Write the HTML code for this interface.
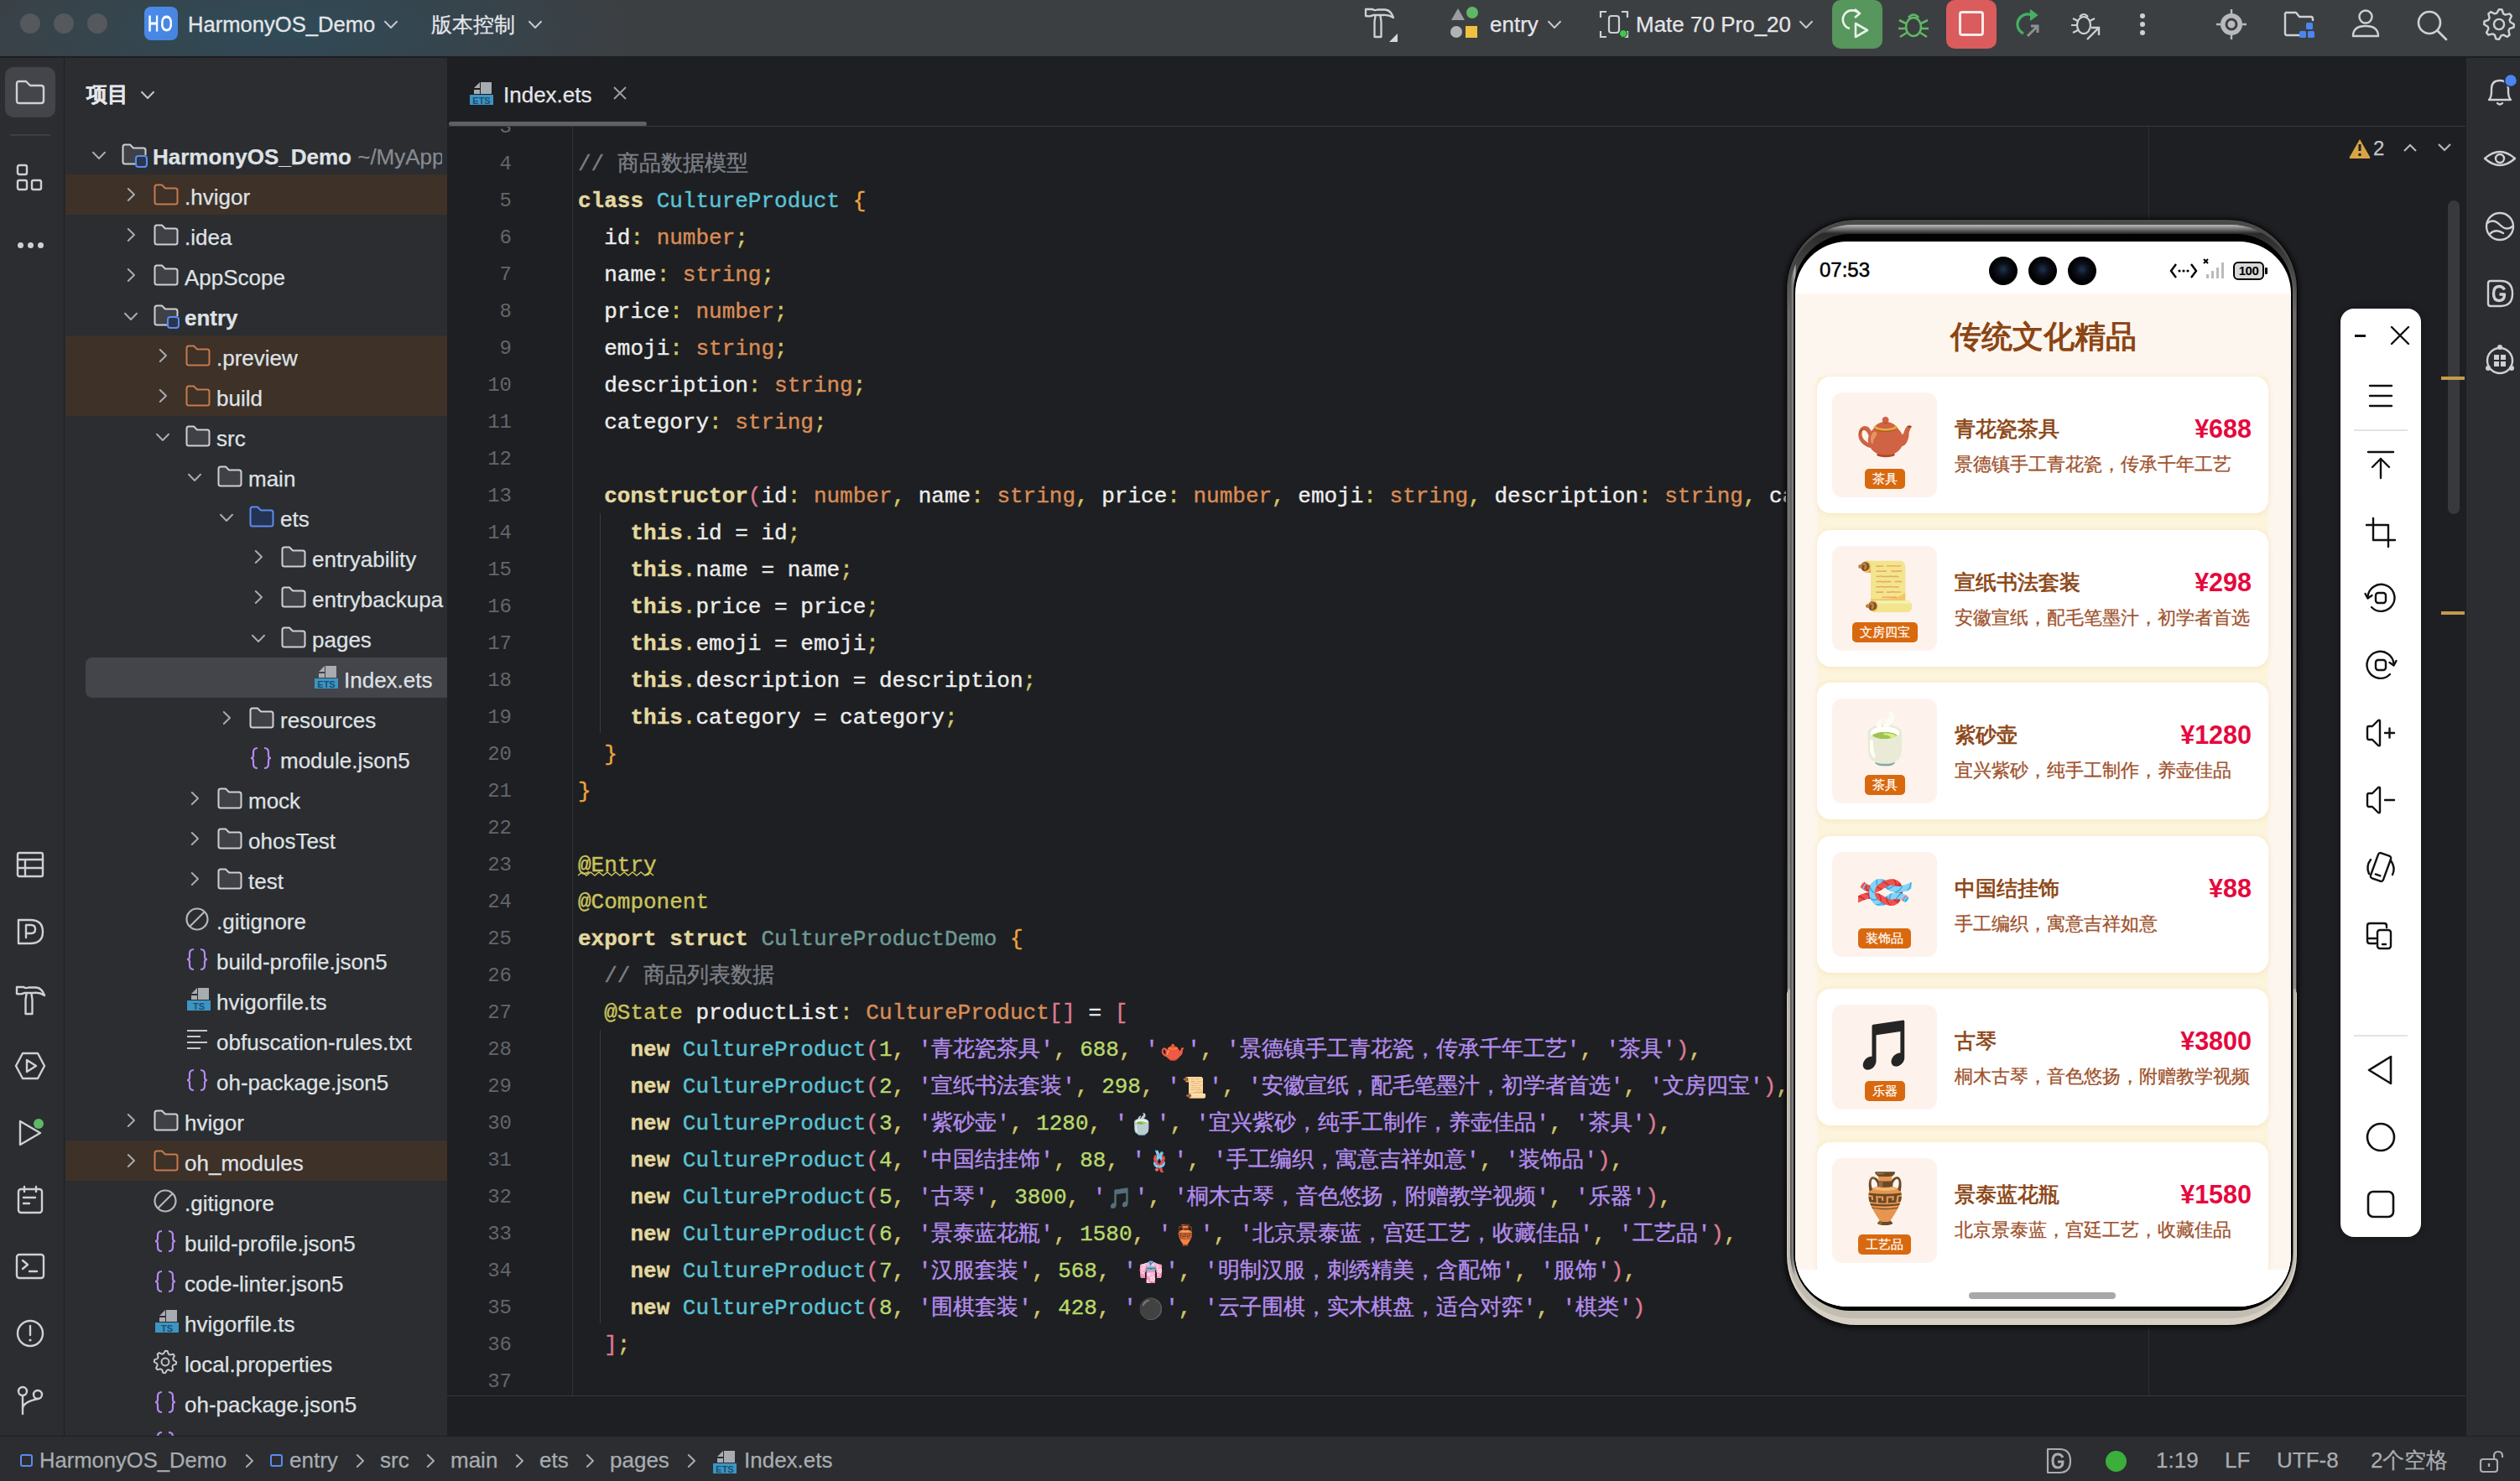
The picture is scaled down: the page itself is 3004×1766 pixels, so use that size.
<!DOCTYPE html><html><head><meta charset="utf-8"><title>DevEco</title><style>
*{box-sizing:border-box;margin:0;padding:0}
html,body{width:3004px;height:1766px;overflow:hidden;background:#1e1f22;font-family:'Liberation Sans', sans-serif;}
.a{position:absolute}
.t{position:absolute;white-space:pre;font-family:'Liberation Sans', sans-serif;font-size:26px;color:#dfe1e5;line-height:48px;-webkit-text-stroke:0.25px currentColor}
.cl{position:absolute;left:689px;height:44px;line-height:44px;white-space:pre;font-family:'Liberation Mono', monospace;font-size:26px;color:#e6e6e6;-webkit-text-stroke:0.4px currentColor}
.ln{position:absolute;left:560px;width:50px;text-align:right;height:44px;line-height:44px;font-family:'Liberation Mono', monospace;font-size:24px;color:#62666d}
.w{letter-spacing:0px}
.kw{color:#e3d9a0;font-weight:bold}
.ty{color:#d98c55}
.cls{color:#5ac3d6}
.cm{color:#7a7e85}
.br{color:#eda53c}
.sc{color:#d2c768}
.an{color:#c9c35c}
.nm{color:#b9d86e}
.st{color:#b28cec}
.pr{color:#dd7a93}
.dm{color:#6e9a96}
.fd{color:#ededed}
svg{position:absolute;overflow:visible}
</style></head><body>
<div class="a" style="left:0;top:0;width:3004px;height:68px;background:#3c3f42"></div>
<div class="a" style="left:0;top:0;width:1100px;height:68px;background:radial-gradient(ellipse 430px 110px at 330px 34px,#2f4b58 0%,rgba(50,72,84,0.7) 45%,rgba(60,63,66,0) 100%)"></div>
<div class="a" style="left:0;top:67px;width:3004px;height:2px;background:#1e1f22"></div>
<div class="a" style="left:24px;top:16px;width:24px;height:24px;border-radius:12px;background:#55585c"></div>
<div class="a" style="left:64px;top:16px;width:24px;height:24px;border-radius:12px;background:#55585c"></div>
<div class="a" style="left:104px;top:16px;width:24px;height:24px;border-radius:12px;background:#55585c"></div>
<div class="a" style="left:172px;top:8px;width:40px;height:40px;border-radius:8px;background:linear-gradient(135deg,#4a8cec,#4684dc)"></div>
<div class="a" style="left:162px;top:8px;width:60px;height:40px;color:#fff;font:26px 'Liberation Sans', sans-serif;line-height:40px;text-align:center;transform:scaleX(0.7);letter-spacing:3px;-webkit-text-stroke:0.8px #fff">HO</div>
<div class="t" style="left:224px;top:5px;font-size:25.6px;line-height:48px;color:#e4e6ea;-webkit-text-stroke:0.3px #e4e6ea">HarmonyOS_Demo</div>
<svg style="left:458px;top:21px" width="16" height="16"><path d="M1 4.8 L8.0 12.0 L15 4.8" fill="none" stroke="#c5c7cc" stroke-width="2" stroke-linecap="round" stroke-linejoin="round"/></svg>
<div class="t" style="left:514px;top:5px;font-size:25px;color:#e4e6ea">版本控制</div>
<svg style="left:630px;top:21px" width="16" height="16"><path d="M1 4.8 L8.0 12.0 L15 4.8" fill="none" stroke="#c5c7cc" stroke-width="2" stroke-linecap="round" stroke-linejoin="round"/></svg>
<svg style="left:1624px;top:6px" width="46" height="46"><path d="M4 5 H12 Q15 7 18 5.5 H27 Q34 6 37 15 Q31 11 24 12 H13 Q10 14 4 13 Z" fill="none" stroke="#ced0d6" stroke-width="2.3" stroke-linejoin="round"/><path d="M15.5 13 L14.5 20 V38 H22.5 V20 L21.5 13" fill="none" stroke="#ced0d6" stroke-width="2.3" stroke-linejoin="round"/><path d="M32 44 L42 34 V44 Z" fill="#d5d7db"/></svg>
<svg style="left:1728px;top:6px" width="40" height="44"><path d="M10 4 L18 18 H2 Z" fill="#9a9ca1"/><circle cx="27" cy="9" r="7" fill="#5fb865"/><circle cx="8" cy="32" r="7" fill="#b0b2b6"/><rect x="19" y="25" width="14" height="14" fill="#f0c040"/></svg>
<div class="t" style="left:1776px;top:5px;color:#e4e6ea">entry</div>
<svg style="left:1845px;top:21px" width="16" height="16"><path d="M1 4.8 L8.0 12.0 L15 4.8" fill="none" stroke="#c5c7cc" stroke-width="2" stroke-linecap="round" stroke-linejoin="round"/></svg>
<svg style="left:1906px;top:12px" width="36" height="34"><path d="M2 9 V2 H9 M27 2 H34 V9 M34 25 V32 H27 M9 32 H2 V25" fill="none" stroke="#ced0d6" stroke-width="2.2"/><rect x="12" y="7" width="12" height="20" rx="3" fill="none" stroke="#ced0d6" stroke-width="2.2"/><circle cx="29" cy="28" r="4.5" fill="#3fc84a" stroke="#1d3b1e" stroke-width="1"/></svg>
<div class="t" style="left:1950px;top:5px;color:#e4e6ea">Mate 70 Pro_20</div>
<svg style="left:2145px;top:21px" width="16" height="16"><path d="M1 4.8 L8.0 12.0 L15 4.8" fill="none" stroke="#c5c7cc" stroke-width="2" stroke-linecap="round" stroke-linejoin="round"/></svg>
<div class="a" style="left:2184px;top:0;width:60px;height:58px;border-radius:10px;background:#57965c"></div>
<svg style="left:2196px;top:10px" width="36" height="38"><path d="M20 6 A11 11 0 1 0 9 24" fill="none" stroke="#e8f2e8" stroke-width="2.6"/><path d="M15 1 L21 6 L15 11" fill="none" stroke="#e8f2e8" stroke-width="2.6" stroke-linejoin="round"/><path d="M16 18 L30 26 L16 34 Z" fill="none" stroke="#e8f2e8" stroke-width="2.6" stroke-linejoin="round"/></svg>
<svg style="left:2262px;top:11px" width="38" height="36"><ellipse cx="19" cy="21" rx="9" ry="11" fill="none" stroke="#5fb865" stroke-width="2.6"/><path d="M13 10 Q19 3 25 10" fill="none" stroke="#5fb865" stroke-width="2.6"/><path d="M2 13 L10 17 M36 13 L28 17 M1 23 H10 M37 23 H28 M3 33 L11 28 M35 33 L27 28" stroke="#5fb865" stroke-width="2.6"/></svg>
<div class="a" style="left:2320px;top:0;width:60px;height:58px;border-radius:10px;background:#db5c5c"></div>
<div class="a" style="left:2335px;top:13px;width:30px;height:30px;border:3px solid #fbeaea;border-radius:4px"></div>
<svg style="left:2400px;top:10px" width="36" height="38"><path d="M22 8 A11 11 0 1 0 12 30" fill="none" stroke="#45b062" stroke-width="3.2"/><path d="M20 2 L28 8 L20 14" fill="#45b062" stroke="#45b062" stroke-width="2"/><path d="M17 33 L28 22 M21 21 H29 V29" fill="none" stroke="#8c8f94" stroke-width="3"/></svg>
<svg style="left:2468px;top:11px" width="38" height="38"><ellipse cx="16" cy="19" rx="8" ry="10" fill="none" stroke="#ced0d6" stroke-width="2.2"/><path d="M11 9 Q16 3 21 9" fill="none" stroke="#ced0d6" stroke-width="2.2"/><path d="M3 11 L9 14 M29 11 L23 14 M1 19 H8 M3 28 L9 25" stroke="#ced0d6" stroke-width="2.2"/><path d="M20 36 L33 23 M25 22 H34 V31" fill="none" stroke="#ced0d6" stroke-width="2.4"/></svg>
<div class="a" style="left:2551px;top:16px;width:6px;height:6px;border-radius:3px;background:#ced0d6"></div>
<div class="a" style="left:2551px;top:26px;width:6px;height:6px;border-radius:3px;background:#ced0d6"></div>
<div class="a" style="left:2551px;top:36px;width:6px;height:6px;border-radius:3px;background:#ced0d6"></div>
<svg style="left:2640px;top:9px" width="40" height="40"><circle cx="20" cy="20" r="13" fill="#b7b9bd"/><circle cx="20" cy="20" r="6" fill="none" stroke="#3c3f42" stroke-width="3"/><path d="M20 2 V7 M20 33 V38 M2 20 H7 M33 20 H38" stroke="#b7b9bd" stroke-width="2.4"/></svg>
<svg style="left:2722px;top:11px" width="42" height="38"><path d="M2 4 H15 L19 9 H33 Q35 9 35 12 V14 M24 31 H4 Q2 31 2 29 V4" fill="none" stroke="#ced0d6" stroke-width="2.4" stroke-linejoin="round"/><rect x="27" y="16" width="8" height="8" rx="1.5" fill="#4a86f0"/><rect x="19" y="26" width="8" height="8" rx="1.5" fill="#4a86f0"/><rect x="29" y="26" width="8" height="8" rx="1.5" fill="#4a86f0"/></svg>
<svg style="left:2802px;top:9px" width="36" height="40"><circle cx="18" cy="11" r="7.5" fill="none" stroke="#ced0d6" stroke-width="2.4"/><path d="M3 34 Q3 22 18 22 Q33 22 33 34 Z" fill="none" stroke="#ced0d6" stroke-width="2.4" stroke-linejoin="round"/></svg>
<svg style="left:2880px;top:10px" width="40" height="40"><circle cx="16" cy="17" r="13" fill="none" stroke="#ced0d6" stroke-width="2.6"/><path d="M26 27 L36 37" stroke="#ced0d6" stroke-width="2.8" stroke-linecap="round"/></svg>
<svg style="left:2960px;top:10px" width="38" height="38"><path d="M19.0 1.1 L22.5 1.5 L24.2 6.4 L26.6 7.6 L31.6 6.4 L33.9 9.1 L31.6 13.8 L32.4 16.3 L36.9 19.0 L36.5 22.5 L31.6 24.2 L30.4 26.6 L31.6 31.6 L28.9 33.9 L24.2 31.6 L21.7 32.4 L19.0 36.9 L15.5 36.5 L13.8 31.6 L11.4 30.4 L6.4 31.6 L4.1 28.9 L6.4 24.2 L5.6 21.7 L1.1 19.0 L1.5 15.5 L6.4 13.8 L7.6 11.4 L6.4 6.4 L9.1 4.1 L13.8 6.4 L16.3 5.6 Z" fill="none" stroke="#ced0d6" stroke-width="2.4" stroke-linejoin="round"/><circle cx="19.0" cy="19.0" r="6.08" fill="none" stroke="#ced0d6" stroke-width="2.4"/></svg>
<div class="a" style="left:0;top:69px;width:76px;height:1643px;background:#2b2d30"></div>
<div class="a" style="left:76px;top:69px;width:1px;height:1643px;background:#1e1f22"></div>
<div class="a" style="left:6px;top:80px;width:60px;height:60px;border-radius:10px;background:#43454a"></div>
<svg style="left:18px;top:95px" width="36" height="30"><path d="M2 5 Q2 2 5 2 H13 L18 7 H31 Q34 7 34 10 V25 Q34 28 31 28 H5 Q2 28 2 25 Z" fill="none" stroke="#ced0d6" stroke-width="2.4" stroke-linejoin="round"/></svg>
<div class="a" style="left:12px;top:160px;width:48px;height:2px;background:#3c3e42"></div>
<svg style="left:19px;top:195px" width="36" height="36"><rect x="2" y="2" width="11" height="11" rx="2" fill="none" stroke="#ced0d6" stroke-width="2.4"/><rect x="2" y="20" width="11" height="11" rx="2" fill="none" stroke="#ced0d6" stroke-width="2.4"/><rect x="19" y="20" width="11" height="11" rx="2" fill="none" stroke="#ced0d6" stroke-width="2.4"/></svg>
<div class="a" style="left:21px;top:289px;width:7px;height:7px;border-radius:4px;background:#ced0d6"></div>
<div class="a" style="left:33px;top:289px;width:7px;height:7px;border-radius:4px;background:#ced0d6"></div>
<div class="a" style="left:45px;top:289px;width:7px;height:7px;border-radius:4px;background:#ced0d6"></div>
<svg style="left:16px;top:1011px" width="40" height="40"><rect x="5" y="6" width="30" height="28" rx="2" fill="none" stroke="#ced0d6" stroke-width="2.4" stroke-linejoin="round" stroke-linecap="round"/><path d="M5 14 H35 M5 24 H35 M14 14 V34" fill="none" stroke="#ced0d6" stroke-width="2.4" stroke-linejoin="round" stroke-linecap="round"/></svg>
<svg style="left:16px;top:1091px" width="40" height="40"><path d="M6 6 H20 Q35 6 35 20 Q35 34 20 34 H6 Z" fill="none" stroke="#ced0d6" stroke-width="2.4" stroke-linejoin="round" stroke-linecap="round"/><path d="M15 27 V12 H21 Q26 12 26 17 Q26 22 21 22 H15" fill="none" stroke="#ced0d6" stroke-width="2.4" stroke-linejoin="round" stroke-linecap="round"/></svg>
<svg style="left:16px;top:1171px" width="40" height="40"><path d="M4 6 H12 Q15 8 18 6.5 H27 Q34 7 37 16 Q31 12 24 13 H13 Q10 15 4 14 Z" fill="none" stroke="#ced0d6" stroke-width="2.4" stroke-linejoin="round" stroke-linecap="round"/><path d="M15.5 14 L14.5 21 V38 H22.5 V21 L21.5 14" fill="none" stroke="#ced0d6" stroke-width="2.4" stroke-linejoin="round" stroke-linecap="round"/></svg>
<svg style="left:16px;top:1251px" width="40" height="40"><path d="M11 5 H29 L37 20 L29 35 H11 L3 20 Z" fill="none" stroke="#ced0d6" stroke-width="2.4" stroke-linejoin="round" stroke-linecap="round"/><path d="M16 13 L27 20 L16 27 Z" fill="none" stroke="#ced0d6" stroke-width="2.4" stroke-linejoin="round" stroke-linecap="round"/></svg>
<svg style="left:16px;top:1331px" width="40" height="40"><path d="M8 6 L32 20 L8 34 Z" fill="none" stroke="#ced0d6" stroke-width="2.4" stroke-linejoin="round" stroke-linecap="round"/><circle cx="30" cy="9" r="6" fill="#5fb865" stroke="none"/></svg>
<svg style="left:16px;top:1411px" width="40" height="40"><rect x="6" y="7" width="28" height="28" rx="3" fill="none" stroke="#ced0d6" stroke-width="2.4" stroke-linejoin="round" stroke-linecap="round"/><path d="M13 4 V10 M27 4 V10 M12 17 H26 M12 24 H19" fill="none" stroke="#ced0d6" stroke-width="2.4" stroke-linejoin="round" stroke-linecap="round"/></svg>
<svg style="left:16px;top:1490px" width="40" height="40"><rect x="4" y="6" width="32" height="28" rx="3" fill="none" stroke="#ced0d6" stroke-width="2.4" stroke-linejoin="round" stroke-linecap="round"/><path d="M11 13 L17 18 L11 23 M19 26 H28" fill="none" stroke="#ced0d6" stroke-width="2.4" stroke-linejoin="round" stroke-linecap="round"/></svg>
<svg style="left:16px;top:1570px" width="40" height="40"><circle cx="20" cy="20" r="15" fill="none" stroke="#ced0d6" stroke-width="2.4" stroke-linejoin="round" stroke-linecap="round"/><path d="M20 11 V22" fill="none" stroke="#ced0d6" stroke-width="2.4" stroke-linejoin="round" stroke-linecap="round"/><circle cx="20" cy="28" r="1.6" fill="#ced0d6"/></svg>
<svg style="left:16px;top:1650px" width="40" height="40"><circle cx="11" cy="9" r="5" fill="none" stroke="#ced0d6" stroke-width="2.4" stroke-linejoin="round" stroke-linecap="round"/><circle cx="29" cy="13" r="5" fill="none" stroke="#ced0d6" stroke-width="2.4" stroke-linejoin="round" stroke-linecap="round"/><path d="M11 14 V36 M11 30 Q11 22 29 18" fill="none" stroke="#ced0d6" stroke-width="2.4" stroke-linejoin="round" stroke-linecap="round"/></svg>
<div class="a" style="left:77px;top:69px;width:456px;height:1643px;background:#2b2d30;overflow:hidden" id="pp">
<div class="t" style="left:26px;top:19px;font-weight:bold;font-size:25px;color:#e4e6ea">项目</div>
<svg style="left:91px;top:36px" width="16" height="16"><path d="M1 4.8 L8.0 12.0 L15 4.8" fill="none" stroke="#c5c7cc" stroke-width="2" stroke-linecap="round" stroke-linejoin="round"/></svg>
<svg style="left:32.5px;top:108px" width="16" height="16"><path d="M1 4.8 L8.0 12.0 L15 4.8" fill="none" stroke="#a8abb0" stroke-width="2" stroke-linecap="round" stroke-linejoin="round"/></svg>
<svg style="left:68px;top:102px" width="32" height="30"><path d="M16 24.5 H4 Q1.5 24.5 1.5 22 V4 Q1.5 1.5 4 1.5 H10 L14 5.5 H26 Q28.5 5.5 28.5 8 V14" fill="#3f4146" stroke="#ced0d6" stroke-width="2" stroke-linejoin="round"/><rect x="17" y="15" width="13" height="13" rx="3" fill="#2a3550" stroke="#5a8cf0" stroke-width="2"/></svg>
<div class="t" style="left:105px;top:94px;font-weight:bold;">HarmonyOS_Demo<span style="font-weight:normal;color:#868a91"> ~/MyApplication</span></div>
<div class="a" style="left:1px;top:139px;width:460px;height:48px;background:#3d3128"></div>
<svg style="left:70.5px;top:155px" width="16" height="16"><path d="M4.8 1 L12.0 8.0 L4.8 15" fill="none" stroke="#a8abb0" stroke-width="2" stroke-linecap="round" stroke-linejoin="round"/></svg>
<svg style="left:106px;top:150px" width="30" height="26"><path d="M1.5 4 Q1.5 1.5 4 1.5 H10 L14 5.5 H26 Q28.5 5.5 28.5 8 V22 Q28.5 24.5 26 24.5 H4 Q1.5 24.5 1.5 22 Z" fill="none" stroke="#c77a4c" stroke-width="2" stroke-linejoin="round"/></svg>
<div class="t" style="left:143px;top:142px;">.hvigor</div>
<svg style="left:70.5px;top:203px" width="16" height="16"><path d="M4.8 1 L12.0 8.0 L4.8 15" fill="none" stroke="#a8abb0" stroke-width="2" stroke-linecap="round" stroke-linejoin="round"/></svg>
<svg style="left:106px;top:198px" width="30" height="26"><path d="M1.5 4 Q1.5 1.5 4 1.5 H10 L14 5.5 H26 Q28.5 5.5 28.5 8 V22 Q28.5 24.5 26 24.5 H4 Q1.5 24.5 1.5 22 Z" fill="#3f4146" stroke="#ced0d6" stroke-width="2" stroke-linejoin="round"/></svg>
<div class="t" style="left:143px;top:190px;">.idea</div>
<svg style="left:70.5px;top:251px" width="16" height="16"><path d="M4.8 1 L12.0 8.0 L4.8 15" fill="none" stroke="#a8abb0" stroke-width="2" stroke-linecap="round" stroke-linejoin="round"/></svg>
<svg style="left:106px;top:246px" width="30" height="26"><path d="M1.5 4 Q1.5 1.5 4 1.5 H10 L14 5.5 H26 Q28.5 5.5 28.5 8 V22 Q28.5 24.5 26 24.5 H4 Q1.5 24.5 1.5 22 Z" fill="#3f4146" stroke="#ced0d6" stroke-width="2" stroke-linejoin="round"/></svg>
<div class="t" style="left:143px;top:238px;">AppScope</div>
<svg style="left:70.5px;top:300px" width="16" height="16"><path d="M1 4.8 L8.0 12.0 L15 4.8" fill="none" stroke="#a8abb0" stroke-width="2" stroke-linecap="round" stroke-linejoin="round"/></svg>
<svg style="left:106px;top:294px" width="32" height="30"><path d="M16 24.5 H4 Q1.5 24.5 1.5 22 V4 Q1.5 1.5 4 1.5 H10 L14 5.5 H26 Q28.5 5.5 28.5 8 V14" fill="#3f4146" stroke="#ced0d6" stroke-width="2" stroke-linejoin="round"/><rect x="17" y="15" width="13" height="13" rx="3" fill="#2a3550" stroke="#5a8cf0" stroke-width="2"/></svg>
<div class="t" style="left:143px;top:286px;font-weight:bold;">entry</div>
<div class="a" style="left:1px;top:331px;width:460px;height:48px;background:#3d3128"></div>
<svg style="left:108.5px;top:347px" width="16" height="16"><path d="M4.8 1 L12.0 8.0 L4.8 15" fill="none" stroke="#a8abb0" stroke-width="2" stroke-linecap="round" stroke-linejoin="round"/></svg>
<svg style="left:144px;top:342px" width="30" height="26"><path d="M1.5 4 Q1.5 1.5 4 1.5 H10 L14 5.5 H26 Q28.5 5.5 28.5 8 V22 Q28.5 24.5 26 24.5 H4 Q1.5 24.5 1.5 22 Z" fill="none" stroke="#c77a4c" stroke-width="2" stroke-linejoin="round"/></svg>
<div class="t" style="left:181px;top:334px;">.preview</div>
<div class="a" style="left:1px;top:379px;width:460px;height:48px;background:#3d3128"></div>
<svg style="left:108.5px;top:395px" width="16" height="16"><path d="M4.8 1 L12.0 8.0 L4.8 15" fill="none" stroke="#a8abb0" stroke-width="2" stroke-linecap="round" stroke-linejoin="round"/></svg>
<svg style="left:144px;top:390px" width="30" height="26"><path d="M1.5 4 Q1.5 1.5 4 1.5 H10 L14 5.5 H26 Q28.5 5.5 28.5 8 V22 Q28.5 24.5 26 24.5 H4 Q1.5 24.5 1.5 22 Z" fill="none" stroke="#c77a4c" stroke-width="2" stroke-linejoin="round"/></svg>
<div class="t" style="left:181px;top:382px;">build</div>
<svg style="left:108.5px;top:444px" width="16" height="16"><path d="M1 4.8 L8.0 12.0 L15 4.8" fill="none" stroke="#a8abb0" stroke-width="2" stroke-linecap="round" stroke-linejoin="round"/></svg>
<svg style="left:144px;top:438px" width="30" height="26"><path d="M1.5 4 Q1.5 1.5 4 1.5 H10 L14 5.5 H26 Q28.5 5.5 28.5 8 V22 Q28.5 24.5 26 24.5 H4 Q1.5 24.5 1.5 22 Z" fill="#3f4146" stroke="#ced0d6" stroke-width="2" stroke-linejoin="round"/></svg>
<div class="t" style="left:181px;top:430px;">src</div>
<svg style="left:146.5px;top:492px" width="16" height="16"><path d="M1 4.8 L8.0 12.0 L15 4.8" fill="none" stroke="#a8abb0" stroke-width="2" stroke-linecap="round" stroke-linejoin="round"/></svg>
<svg style="left:182px;top:486px" width="30" height="26"><path d="M1.5 4 Q1.5 1.5 4 1.5 H10 L14 5.5 H26 Q28.5 5.5 28.5 8 V22 Q28.5 24.5 26 24.5 H4 Q1.5 24.5 1.5 22 Z" fill="#3f4146" stroke="#ced0d6" stroke-width="2" stroke-linejoin="round"/></svg>
<div class="t" style="left:219px;top:478px;">main</div>
<svg style="left:184.5px;top:540px" width="16" height="16"><path d="M1 4.8 L8.0 12.0 L15 4.8" fill="none" stroke="#a8abb0" stroke-width="2" stroke-linecap="round" stroke-linejoin="round"/></svg>
<svg style="left:220px;top:534px" width="30" height="26"><path d="M1.5 4 Q1.5 1.5 4 1.5 H10 L14 5.5 H26 Q28.5 5.5 28.5 8 V22 Q28.5 24.5 26 24.5 H4 Q1.5 24.5 1.5 22 Z" fill="#243352" stroke="#5a8cf0" stroke-width="2" stroke-linejoin="round"/></svg>
<div class="t" style="left:257px;top:526px;">ets</div>
<svg style="left:222.5px;top:587px" width="16" height="16"><path d="M4.8 1 L12.0 8.0 L4.8 15" fill="none" stroke="#a8abb0" stroke-width="2" stroke-linecap="round" stroke-linejoin="round"/></svg>
<svg style="left:258px;top:582px" width="30" height="26"><path d="M1.5 4 Q1.5 1.5 4 1.5 H10 L14 5.5 H26 Q28.5 5.5 28.5 8 V22 Q28.5 24.5 26 24.5 H4 Q1.5 24.5 1.5 22 Z" fill="#3f4146" stroke="#ced0d6" stroke-width="2" stroke-linejoin="round"/></svg>
<div class="t" style="left:295px;top:574px;">entryability</div>
<svg style="left:222.5px;top:635px" width="16" height="16"><path d="M4.8 1 L12.0 8.0 L4.8 15" fill="none" stroke="#a8abb0" stroke-width="2" stroke-linecap="round" stroke-linejoin="round"/></svg>
<svg style="left:258px;top:630px" width="30" height="26"><path d="M1.5 4 Q1.5 1.5 4 1.5 H10 L14 5.5 H26 Q28.5 5.5 28.5 8 V22 Q28.5 24.5 26 24.5 H4 Q1.5 24.5 1.5 22 Z" fill="#3f4146" stroke="#ced0d6" stroke-width="2" stroke-linejoin="round"/></svg>
<div class="t" style="left:295px;top:622px;">entrybackupability</div>
<svg style="left:222.5px;top:684px" width="16" height="16"><path d="M1 4.8 L8.0 12.0 L15 4.8" fill="none" stroke="#a8abb0" stroke-width="2" stroke-linecap="round" stroke-linejoin="round"/></svg>
<svg style="left:258px;top:678px" width="30" height="26"><path d="M1.5 4 Q1.5 1.5 4 1.5 H10 L14 5.5 H26 Q28.5 5.5 28.5 8 V22 Q28.5 24.5 26 24.5 H4 Q1.5 24.5 1.5 22 Z" fill="#3f4146" stroke="#ced0d6" stroke-width="2" stroke-linejoin="round"/></svg>
<div class="t" style="left:295px;top:670px;">pages</div>
<div class="a" style="left:25px;top:715px;width:440px;height:48px;border-radius:8px;background:#43454a"></div>
<svg style="left:297px;top:723px" width="30" height="30"><path d="M6 9 L13 2 V9 Z" fill="#a8abb0"/><rect x="14" y="2" width="13" height="14" fill="#a8abb0"/><rect x="6" y="11" width="7" height="5" fill="#a8abb0"/><rect x="1" y="17" width="28" height="12" fill="#3c95c4"/><text x="15" y="27.5" text-anchor="middle" font-family="Liberation Sans" font-size="11" fill="#1d4f6e" font-weight="bold">ETS</text></svg>
<div class="t" style="left:333px;top:718px;">Index.ets</div>
<svg style="left:184.5px;top:779px" width="16" height="16"><path d="M4.8 1 L12.0 8.0 L4.8 15" fill="none" stroke="#a8abb0" stroke-width="2" stroke-linecap="round" stroke-linejoin="round"/></svg>
<svg style="left:220px;top:774px" width="30" height="26"><path d="M1.5 4 Q1.5 1.5 4 1.5 H10 L14 5.5 H26 Q28.5 5.5 28.5 8 V22 Q28.5 24.5 26 24.5 H4 Q1.5 24.5 1.5 22 Z" fill="#3f4146" stroke="#ced0d6" stroke-width="2" stroke-linejoin="round"/></svg>
<div class="t" style="left:257px;top:766px;">resources</div>
<svg style="left:219px;top:820px" width="30" height="30"><path d="M11 3 Q6 3 6 8 V12 Q6 15 3 15 Q6 15 6 18 V22 Q6 27 11 27 M19 3 Q24 3 24 8 V12 Q24 15 27 15 Q24 15 24 18 V22 Q24 27 19 27" fill="none" stroke="#b48af0" stroke-width="2.2"/></svg>
<div class="t" style="left:257px;top:814px;">module.json5</div>
<svg style="left:146.5px;top:875px" width="16" height="16"><path d="M4.8 1 L12.0 8.0 L4.8 15" fill="none" stroke="#a8abb0" stroke-width="2" stroke-linecap="round" stroke-linejoin="round"/></svg>
<svg style="left:182px;top:870px" width="30" height="26"><path d="M1.5 4 Q1.5 1.5 4 1.5 H10 L14 5.5 H26 Q28.5 5.5 28.5 8 V22 Q28.5 24.5 26 24.5 H4 Q1.5 24.5 1.5 22 Z" fill="#3f4146" stroke="#ced0d6" stroke-width="2" stroke-linejoin="round"/></svg>
<div class="t" style="left:219px;top:862px;">mock</div>
<svg style="left:146.5px;top:923px" width="16" height="16"><path d="M4.8 1 L12.0 8.0 L4.8 15" fill="none" stroke="#a8abb0" stroke-width="2" stroke-linecap="round" stroke-linejoin="round"/></svg>
<svg style="left:182px;top:918px" width="30" height="26"><path d="M1.5 4 Q1.5 1.5 4 1.5 H10 L14 5.5 H26 Q28.5 5.5 28.5 8 V22 Q28.5 24.5 26 24.5 H4 Q1.5 24.5 1.5 22 Z" fill="#3f4146" stroke="#ced0d6" stroke-width="2" stroke-linejoin="round"/></svg>
<div class="t" style="left:219px;top:910px;">ohosTest</div>
<svg style="left:146.5px;top:971px" width="16" height="16"><path d="M4.8 1 L12.0 8.0 L4.8 15" fill="none" stroke="#a8abb0" stroke-width="2" stroke-linecap="round" stroke-linejoin="round"/></svg>
<svg style="left:182px;top:966px" width="30" height="26"><path d="M1.5 4 Q1.5 1.5 4 1.5 H10 L14 5.5 H26 Q28.5 5.5 28.5 8 V22 Q28.5 24.5 26 24.5 H4 Q1.5 24.5 1.5 22 Z" fill="#3f4146" stroke="#ced0d6" stroke-width="2" stroke-linejoin="round"/></svg>
<div class="t" style="left:219px;top:958px;">test</div>
<svg style="left:143px;top:1012px" width="30" height="30"><circle cx="15" cy="15" r="12.5" fill="none" stroke="#b5b7bb" stroke-width="2.2"/><path d="M6 24 L24 6" stroke="#b5b7bb" stroke-width="2.2"/></svg>
<div class="t" style="left:181px;top:1006px;">.gitignore</div>
<svg style="left:143px;top:1060px" width="30" height="30"><path d="M11 3 Q6 3 6 8 V12 Q6 15 3 15 Q6 15 6 18 V22 Q6 27 11 27 M19 3 Q24 3 24 8 V12 Q24 15 27 15 Q24 15 24 18 V22 Q24 27 19 27" fill="none" stroke="#b48af0" stroke-width="2.2"/></svg>
<div class="t" style="left:181px;top:1054px;">build-profile.json5</div>
<svg style="left:145px;top:1107px" width="30" height="30"><path d="M6 9 L13 2 V9 Z" fill="#a8abb0"/><rect x="14" y="2" width="13" height="14" fill="#a8abb0"/><rect x="6" y="11" width="7" height="5" fill="#a8abb0"/><rect x="1" y="17" width="28" height="12" fill="#3c95c4"/><text x="15" y="27.5" text-anchor="middle" font-family="Liberation Sans" font-size="11" fill="#1d4f6e" font-weight="bold">TS</text></svg>
<div class="t" style="left:181px;top:1102px;">hvigorfile.ts</div>
<svg style="left:143px;top:1156px" width="30" height="30"><path d="M3 4 H27 M3 11 H19 M3 18 H27 M3 25 H19" stroke="#c5c7cc" stroke-width="2"/></svg>
<div class="t" style="left:181px;top:1150px;">obfuscation-rules.txt</div>
<svg style="left:143px;top:1204px" width="30" height="30"><path d="M11 3 Q6 3 6 8 V12 Q6 15 3 15 Q6 15 6 18 V22 Q6 27 11 27 M19 3 Q24 3 24 8 V12 Q24 15 27 15 Q24 15 24 18 V22 Q24 27 19 27" fill="none" stroke="#b48af0" stroke-width="2.2"/></svg>
<div class="t" style="left:181px;top:1198px;">oh-package.json5</div>
<svg style="left:70.5px;top:1259px" width="16" height="16"><path d="M4.8 1 L12.0 8.0 L4.8 15" fill="none" stroke="#a8abb0" stroke-width="2" stroke-linecap="round" stroke-linejoin="round"/></svg>
<svg style="left:106px;top:1254px" width="30" height="26"><path d="M1.5 4 Q1.5 1.5 4 1.5 H10 L14 5.5 H26 Q28.5 5.5 28.5 8 V22 Q28.5 24.5 26 24.5 H4 Q1.5 24.5 1.5 22 Z" fill="#3f4146" stroke="#ced0d6" stroke-width="2" stroke-linejoin="round"/></svg>
<div class="t" style="left:143px;top:1246px;">hvigor</div>
<div class="a" style="left:1px;top:1291px;width:460px;height:48px;background:#3d3128"></div>
<svg style="left:70.5px;top:1307px" width="16" height="16"><path d="M4.8 1 L12.0 8.0 L4.8 15" fill="none" stroke="#a8abb0" stroke-width="2" stroke-linecap="round" stroke-linejoin="round"/></svg>
<svg style="left:106px;top:1302px" width="30" height="26"><path d="M1.5 4 Q1.5 1.5 4 1.5 H10 L14 5.5 H26 Q28.5 5.5 28.5 8 V22 Q28.5 24.5 26 24.5 H4 Q1.5 24.5 1.5 22 Z" fill="none" stroke="#c77a4c" stroke-width="2" stroke-linejoin="round"/></svg>
<div class="t" style="left:143px;top:1294px;">oh_modules</div>
<svg style="left:105px;top:1348px" width="30" height="30"><circle cx="15" cy="15" r="12.5" fill="none" stroke="#b5b7bb" stroke-width="2.2"/><path d="M6 24 L24 6" stroke="#b5b7bb" stroke-width="2.2"/></svg>
<div class="t" style="left:143px;top:1342px;">.gitignore</div>
<svg style="left:105px;top:1396px" width="30" height="30"><path d="M11 3 Q6 3 6 8 V12 Q6 15 3 15 Q6 15 6 18 V22 Q6 27 11 27 M19 3 Q24 3 24 8 V12 Q24 15 27 15 Q24 15 24 18 V22 Q24 27 19 27" fill="none" stroke="#b48af0" stroke-width="2.2"/></svg>
<div class="t" style="left:143px;top:1390px;">build-profile.json5</div>
<svg style="left:105px;top:1444px" width="30" height="30"><path d="M11 3 Q6 3 6 8 V12 Q6 15 3 15 Q6 15 6 18 V22 Q6 27 11 27 M19 3 Q24 3 24 8 V12 Q24 15 27 15 Q24 15 24 18 V22 Q24 27 19 27" fill="none" stroke="#b48af0" stroke-width="2.2"/></svg>
<div class="t" style="left:143px;top:1438px;">code-linter.json5</div>
<svg style="left:107px;top:1491px" width="30" height="30"><path d="M6 9 L13 2 V9 Z" fill="#a8abb0"/><rect x="14" y="2" width="13" height="14" fill="#a8abb0"/><rect x="6" y="11" width="7" height="5" fill="#a8abb0"/><rect x="1" y="17" width="28" height="12" fill="#3c95c4"/><text x="15" y="27.5" text-anchor="middle" font-family="Liberation Sans" font-size="11" fill="#1d4f6e" font-weight="bold">TS</text></svg>
<div class="t" style="left:143px;top:1486px;">hvigorfile.ts</div>
<svg style="left:106px;top:1541px" width="28" height="28"><path d="M14.0 0.8 L16.6 1.1 L17.9 4.7 L19.6 5.6 L23.3 4.7 L24.9 6.7 L23.3 10.1 L23.9 12.0 L27.2 14.0 L26.9 16.6 L23.3 17.9 L22.4 19.6 L23.3 23.3 L21.3 24.9 L17.9 23.3 L16.0 23.9 L14.0 27.2 L11.4 26.9 L10.1 23.3 L8.4 22.4 L4.7 23.3 L3.1 21.3 L4.7 17.9 L4.1 16.0 L0.8 14.0 L1.1 11.4 L4.7 10.1 L5.6 8.4 L4.7 4.7 L6.7 3.1 L10.1 4.7 L12.0 4.1 Z" fill="none" stroke="#c5c7cc" stroke-width="2" stroke-linejoin="round"/><circle cx="14.0" cy="14.0" r="4.48" fill="none" stroke="#c5c7cc" stroke-width="2"/></svg>
<div class="t" style="left:143px;top:1534px;">local.properties</div>
<svg style="left:105px;top:1588px" width="30" height="30"><path d="M11 3 Q6 3 6 8 V12 Q6 15 3 15 Q6 15 6 18 V22 Q6 27 11 27 M19 3 Q24 3 24 8 V12 Q24 15 27 15 Q24 15 24 18 V22 Q24 27 19 27" fill="none" stroke="#b48af0" stroke-width="2.2"/></svg>
<div class="t" style="left:143px;top:1582px;">oh-package.json5</div>
<svg style="left:105px;top:1636px" width="30" height="30"><path d="M11 3 Q6 3 6 8 V12 Q6 15 3 15 Q6 15 6 18 V22 Q6 27 11 27 M19 3 Q24 3 24 8 V12 Q24 15 27 15 Q24 15 24 18 V22 Q24 27 19 27" fill="none" stroke="#b48af0" stroke-width="2.2"/></svg>
<div class="t" style="left:143px;top:1630px;"></div>
<div class="a" style="left:452px;top:619px;width:6px;height:48px;background:#2b2d30"></div>
<div class="a" style="left:450px;top:91px;width:8px;height:48px;background:#2b2d30"></div>
</div>
<div class="a" style="left:533px;top:69px;width:2407px;height:1643px;background:#1e1f22"></div>
<svg style="left:559px;top:96px" width="30" height="30"><path d="M6 9 L13 2 V9 Z" fill="#a8abb0"/><rect x="14" y="2" width="13" height="14" fill="#a8abb0"/><rect x="6" y="11" width="7" height="5" fill="#a8abb0"/><rect x="1" y="17" width="28" height="12" fill="#3c95c4"/><text x="15" y="27.5" text-anchor="middle" font-family="Liberation Sans" font-size="11" fill="#1d4f6e" font-weight="bold">ETS</text></svg>
<div class="t" style="left:600px;top:89px;color:#e4e6ea">Index.ets</div>
<svg style="left:731px;top:103px" width="16" height="16"><path d="M1 1 L15 15 M15 1 L1 15" stroke="#9a9da2" stroke-width="2"/></svg>
<div class="a" style="left:533px;top:150px;width:2407px;height:1px;background:#35373b"></div>
<div class="a" style="left:535px;top:145px;width:236px;height:5px;border-radius:3px;background:#5d6064"></div>
<div class="a" style="left:682px;top:151px;width:1px;height:1514px;background:#313337"></div>
<div class="a" style="left:2561px;top:151px;width:1px;height:1514px;background:#2e3034"></div>
<div class="a" style="left:533px;top:1664px;width:2407px;height:1px;background:#35373b"></div>
<div class="a" style="left:2918px;top:239px;width:14px;height:374px;border-radius:7px;background:#37393d"></div>
<div class="a" style="left:2910px;top:449px;width:28px;height:4px;background:#c49a4a"></div>
<div class="a" style="left:2910px;top:729px;width:28px;height:4px;background:#c49a4a"></div>
<svg style="left:2799px;top:164px" width="28" height="26"><path d="M14 2 L26 23 Q27 25 25 25 H3 Q1 25 2 23 Z" fill="#d9a444"/><path d="M14 8 V16" stroke="#1e1f22" stroke-width="3"/><circle cx="14" cy="20.5" r="1.8" fill="#1e1f22"/></svg>
<div class="t" style="left:2829px;top:153px;font-size:24px;color:#c5c7cc">2</div>
<svg style="left:2864px;top:170px" width="18" height="12"><path d="M2 10 L9 3 L16 10" fill="none" stroke="#b5b7bb" stroke-width="2.2"/></svg>
<svg style="left:2905px;top:170px" width="18" height="12"><path d="M2 2 L9 9 L16 2" fill="none" stroke="#b5b7bb" stroke-width="2.2"/></svg>
<div class="ln" style="top:130px">3</div>
<div class="ln" style="top:174px">4</div>
<div class="cl" style="top:174px"><span class="cm">// <span class="w">商品数据模型</span></span></div>
<div class="ln" style="top:218px">5</div>
<div class="cl" style="top:218px"><span class="kw">class</span> <span class="cls">CultureProduct</span> <span class="br">{</span></div>
<div class="ln" style="top:262px">6</div>
<div class="cl" style="top:262px">  <span class="fd">id</span><span class="sc">:</span> <span class="ty">number</span><span class="sc">;</span></div>
<div class="ln" style="top:306px">7</div>
<div class="cl" style="top:306px">  <span class="fd">name</span><span class="sc">:</span> <span class="ty">string</span><span class="sc">;</span></div>
<div class="ln" style="top:350px">8</div>
<div class="cl" style="top:350px">  <span class="fd">price</span><span class="sc">:</span> <span class="ty">number</span><span class="sc">;</span></div>
<div class="ln" style="top:394px">9</div>
<div class="cl" style="top:394px">  <span class="fd">emoji</span><span class="sc">:</span> <span class="ty">string</span><span class="sc">;</span></div>
<div class="ln" style="top:438px">10</div>
<div class="cl" style="top:438px">  <span class="fd">description</span><span class="sc">:</span> <span class="ty">string</span><span class="sc">;</span></div>
<div class="ln" style="top:482px">11</div>
<div class="cl" style="top:482px">  <span class="fd">category</span><span class="sc">:</span> <span class="ty">string</span><span class="sc">;</span></div>
<div class="ln" style="top:526px">12</div>
<div class="ln" style="top:570px">13</div>
<div class="cl" style="top:570px">  <span class="kw">constructor</span><span class="pr">(</span><span class="fd">id</span><span class="sc">:</span> <span class="ty">number</span><span class="sc">,</span> <span class="fd">name</span><span class="sc">:</span> <span class="ty">string</span><span class="sc">,</span> <span class="fd">price</span><span class="sc">:</span> <span class="ty">number</span><span class="sc">,</span> <span class="fd">emoji</span><span class="sc">:</span> <span class="ty">string</span><span class="sc">,</span> <span class="fd">description</span><span class="sc">:</span> <span class="ty">string</span><span class="sc">,</span> <span class="fd">category</span><span class="sc">:</span> <span class="ty">string</span><span class="pr">)</span> <span class="br">{</span></div>
<div class="ln" style="top:614px">14</div>
<div class="cl" style="top:614px">    <span class="kw">this</span><span class="sc">.</span><span class="fd">id</span> <span class="fd">=</span> <span class="fd">id</span><span class="sc">;</span></div>
<div class="ln" style="top:658px">15</div>
<div class="cl" style="top:658px">    <span class="kw">this</span><span class="sc">.</span><span class="fd">name</span> <span class="fd">=</span> <span class="fd">name</span><span class="sc">;</span></div>
<div class="ln" style="top:702px">16</div>
<div class="cl" style="top:702px">    <span class="kw">this</span><span class="sc">.</span><span class="fd">price</span> <span class="fd">=</span> <span class="fd">price</span><span class="sc">;</span></div>
<div class="ln" style="top:746px">17</div>
<div class="cl" style="top:746px">    <span class="kw">this</span><span class="sc">.</span><span class="fd">emoji</span> <span class="fd">=</span> <span class="fd">emoji</span><span class="sc">;</span></div>
<div class="ln" style="top:790px">18</div>
<div class="cl" style="top:790px">    <span class="kw">this</span><span class="sc">.</span><span class="fd">description</span> <span class="fd">=</span> <span class="fd">description</span><span class="sc">;</span></div>
<div class="ln" style="top:834px">19</div>
<div class="cl" style="top:834px">    <span class="kw">this</span><span class="sc">.</span><span class="fd">category</span> <span class="fd">=</span> <span class="fd">category</span><span class="sc">;</span></div>
<div class="ln" style="top:878px">20</div>
<div class="cl" style="top:878px">  <span class="br">}</span></div>
<div class="ln" style="top:922px">21</div>
<div class="cl" style="top:922px"><span class="br">}</span></div>
<div class="ln" style="top:966px">22</div>
<div class="ln" style="top:1010px">23</div>
<div class="cl" style="top:1010px"><span class="an">@Entry</span></div>
<div class="ln" style="top:1054px">24</div>
<div class="cl" style="top:1054px"><span class="an">@Component</span></div>
<div class="ln" style="top:1098px">25</div>
<div class="cl" style="top:1098px"><span class="kw">export</span> <span class="kw">struct</span> <span class="dm">CultureProductDemo</span> <span class="br">{</span></div>
<div class="ln" style="top:1142px">26</div>
<div class="cl" style="top:1142px">  <span class="cm">// <span class="w">商品列表数据</span></span></div>
<div class="ln" style="top:1186px">27</div>
<div class="cl" style="top:1186px">  <span class="an">@State</span> <span class="fd">productList</span><span class="sc">:</span> <span class="ty">CultureProduct</span><span class="pr">[]</span> <span class="fd">=</span> <span class="pr">[</span></div>
<div class="ln" style="top:1230px">28</div>
<div class="cl" style="top:1230px">    <span class="kw">new</span> <span class="cls">CultureProduct</span><span class="pr">(</span><span class="nm">1</span><span class="sc">,</span> <span class="st">'<span class="w">青花瓷茶具</span>'</span><span class="sc">,</span> <span class="nm">688</span><span class="sc">,</span> <span class="st">'</span><span style="display:inline-block;width:34.4px;text-align:left;padding-left:2px;font-size:24px;line-height:20px;vertical-align:-2px">🫖</span><span class="st">'</span><span class="sc">,</span> <span class="st">'<span class="w">景德镇手工青花瓷，传承千年工艺</span>'</span><span class="sc">,</span> <span class="st">'<span class="w">茶具</span>'</span><span class="pr">)</span><span class="sc">,</span></div>
<div class="ln" style="top:1274px">29</div>
<div class="cl" style="top:1274px">    <span class="kw">new</span> <span class="cls">CultureProduct</span><span class="pr">(</span><span class="nm">2</span><span class="sc">,</span> <span class="st">'<span class="w">宣纸书法套装</span>'</span><span class="sc">,</span> <span class="nm">298</span><span class="sc">,</span> <span class="st">'</span><span style="display:inline-block;width:34.4px;text-align:left;padding-left:2px;font-size:24px;line-height:20px;vertical-align:-2px">📜</span><span class="st">'</span><span class="sc">,</span> <span class="st">'<span class="w">安徽宣纸，配毛笔墨汁，初学者首选</span>'</span><span class="sc">,</span> <span class="st">'<span class="w">文房四宝</span>'</span><span class="pr">)</span><span class="sc">,</span></div>
<div class="ln" style="top:1318px">30</div>
<div class="cl" style="top:1318px">    <span class="kw">new</span> <span class="cls">CultureProduct</span><span class="pr">(</span><span class="nm">3</span><span class="sc">,</span> <span class="st">'<span class="w">紫砂壶</span>'</span><span class="sc">,</span> <span class="nm">1280</span><span class="sc">,</span> <span class="st">'</span><span style="display:inline-block;width:34.4px;text-align:left;padding-left:2px;font-size:24px;line-height:20px;vertical-align:-2px">🍵</span><span class="st">'</span><span class="sc">,</span> <span class="st">'<span class="w">宜兴紫砂，纯手工制作，养壶佳品</span>'</span><span class="sc">,</span> <span class="st">'<span class="w">茶具</span>'</span><span class="pr">)</span><span class="sc">,</span></div>
<div class="ln" style="top:1362px">31</div>
<div class="cl" style="top:1362px">    <span class="kw">new</span> <span class="cls">CultureProduct</span><span class="pr">(</span><span class="nm">4</span><span class="sc">,</span> <span class="st">'<span class="w">中国结挂饰</span>'</span><span class="sc">,</span> <span class="nm">88</span><span class="sc">,</span> <span class="st">'</span><span style="display:inline-block;width:34.4px;text-align:left;padding-left:2px;font-size:24px;line-height:20px;vertical-align:-2px">🪢</span><span class="st">'</span><span class="sc">,</span> <span class="st">'<span class="w">手工编织，寓意吉祥如意</span>'</span><span class="sc">,</span> <span class="st">'<span class="w">装饰品</span>'</span><span class="pr">)</span><span class="sc">,</span></div>
<div class="ln" style="top:1406px">32</div>
<div class="cl" style="top:1406px">    <span class="kw">new</span> <span class="cls">CultureProduct</span><span class="pr">(</span><span class="nm">5</span><span class="sc">,</span> <span class="st">'<span class="w">古琴</span>'</span><span class="sc">,</span> <span class="nm">3800</span><span class="sc">,</span> <span class="st">'</span><span style="display:inline-block;width:34.4px;text-align:left;padding-left:2px;font-size:24px;line-height:20px;vertical-align:-2px">🎵</span><span class="st">'</span><span class="sc">,</span> <span class="st">'<span class="w">桐木古琴，音色悠扬，附赠教学视频</span>'</span><span class="sc">,</span> <span class="st">'<span class="w">乐器</span>'</span><span class="pr">)</span><span class="sc">,</span></div>
<div class="ln" style="top:1450px">33</div>
<div class="cl" style="top:1450px">    <span class="kw">new</span> <span class="cls">CultureProduct</span><span class="pr">(</span><span class="nm">6</span><span class="sc">,</span> <span class="st">'<span class="w">景泰蓝花瓶</span>'</span><span class="sc">,</span> <span class="nm">1580</span><span class="sc">,</span> <span class="st">'</span><span style="display:inline-block;width:34.4px;text-align:left;padding-left:2px;font-size:24px;line-height:20px;vertical-align:-2px">🏺</span><span class="st">'</span><span class="sc">,</span> <span class="st">'<span class="w">北京景泰蓝，宫廷工艺，收藏佳品</span>'</span><span class="sc">,</span> <span class="st">'<span class="w">工艺品</span>'</span><span class="pr">)</span><span class="sc">,</span></div>
<div class="ln" style="top:1494px">34</div>
<div class="cl" style="top:1494px">    <span class="kw">new</span> <span class="cls">CultureProduct</span><span class="pr">(</span><span class="nm">7</span><span class="sc">,</span> <span class="st">'<span class="w">汉服套装</span>'</span><span class="sc">,</span> <span class="nm">568</span><span class="sc">,</span> <span class="st">'</span><span style="display:inline-block;width:34.4px;text-align:left;padding-left:2px;font-size:24px;line-height:20px;vertical-align:-2px">👘</span><span class="st">'</span><span class="sc">,</span> <span class="st">'<span class="w">明制汉服，刺绣精美，含配饰</span>'</span><span class="sc">,</span> <span class="st">'<span class="w">服饰</span>'</span><span class="pr">)</span><span class="sc">,</span></div>
<div class="ln" style="top:1538px">35</div>
<div class="cl" style="top:1538px">    <span class="kw">new</span> <span class="cls">CultureProduct</span><span class="pr">(</span><span class="nm">8</span><span class="sc">,</span> <span class="st">'<span class="w">围棋套装</span>'</span><span class="sc">,</span> <span class="nm">428</span><span class="sc">,</span> <span class="st">'</span><span style="display:inline-block;width:34.4px;text-align:left;padding-left:2px;font-size:24px;line-height:20px;vertical-align:-2px">⚫</span><span class="st">'</span><span class="sc">,</span> <span class="st">'<span class="w">云子围棋，实木棋盘，适合对弈</span>'</span><span class="sc">,</span> <span class="st">'<span class="w">棋类</span>'</span><span class="pr">)</span></div>
<div class="ln" style="top:1582px">36</div>
<div class="cl" style="top:1582px">  <span class="pr">]</span><span class="sc">;</span></div>
<div class="ln" style="top:1626px">37</div>
<svg style="left:689px;top:1038px" width="94" height="8"><path d="M0 6 L5 2 L10 6 L15 2 L20 6 L25 2 L30 6 L35 2 L40 6 L45 2 L50 6 L55 2 L60 6 L65 2 L70 6 L75 2 L80 6 L85 2 L90 6" fill="none" stroke="#c9c35c" stroke-width="1.5"/></svg>
<div class="a" style="left:715px;top:612px;width:1px;height:262px;background:#393b3f"></div>
<div class="a" style="left:715px;top:1228px;width:1px;height:350px;background:#393b3f"></div>
<div class="a" style="left:533px;top:69px;width:2407px;height:81px;background:#1e1f22"></div>
<svg style="left:559px;top:96px" width="30" height="30"><path d="M6 9 L13 2 V9 Z" fill="#a8abb0"/><rect x="14" y="2" width="13" height="14" fill="#a8abb0"/><rect x="6" y="11" width="7" height="5" fill="#a8abb0"/><rect x="1" y="17" width="28" height="12" fill="#3c95c4"/><text x="15" y="27.5" text-anchor="middle" font-family="Liberation Sans" font-size="11" fill="#1d4f6e" font-weight="bold">ETS</text></svg>
<div class="t" style="left:600px;top:89px;color:#e4e6ea">Index.ets</div>
<svg style="left:731px;top:103px" width="16" height="16"><path d="M1 1 L15 15 M15 1 L1 15" stroke="#9a9da2" stroke-width="2"/></svg>
<div class="a" style="left:533px;top:150px;width:2407px;height:1px;background:#35373b"></div>
<div class="a" style="left:535px;top:145px;width:236px;height:5px;border-radius:3px;background:#5d6064"></div>
<div class="a" style="left:2940px;top:69px;width:64px;height:1643px;background:#2b2d30"></div>
<div class="a" style="left:2939px;top:69px;width:1px;height:1643px;background:#1e1f22"></div>
<svg style="left:2960px;top:89px" width="40" height="40"><path d="M7 30 Q10 27 10 20 V17 Q10 7 20 7 Q30 7 30 17 V20 Q30 27 33 30 Z" fill="none" stroke="#ced0d6" stroke-width="2.4" stroke-linejoin="round" stroke-linecap="round"/><path d="M17 34 Q20 37 23 34" fill="none" stroke="#ced0d6" stroke-width="2.4" stroke-linejoin="round" stroke-linecap="round"/><circle cx="33" cy="7" r="7.5" fill="#4a86f0" stroke="#2b2d30" stroke-width="1.5"/></svg>
<svg style="left:2960px;top:169px" width="40" height="40"><path d="M2 20 Q20 4 38 20 Q20 36 2 20 Z" fill="none" stroke="#ced0d6" stroke-width="2.4" stroke-linejoin="round" stroke-linecap="round"/><circle cx="20" cy="20" r="5" fill="none" stroke="#ced0d6" stroke-width="2.4" stroke-linejoin="round" stroke-linecap="round"/></svg>
<svg style="left:2960px;top:250px" width="40" height="40"><circle cx="20" cy="20" r="16" fill="none" stroke="#ced0d6" stroke-width="2.4" stroke-linejoin="round" stroke-linecap="round"/><path d="M5 16 Q12 10 20 18 Q28 26 35 20 M8 29 Q15 22 24 28" fill="none" stroke="#ced0d6" stroke-width="2.4" stroke-linejoin="round" stroke-linecap="round"/></svg>
<svg style="left:2960px;top:330px" width="40" height="40"><path d="M9 5 H21 Q35 5 35 20 Q35 35 21 35 H9 Q6 35 6 32 V8 Q6 5 9 5 Z" fill="none" stroke="#ced0d6" stroke-width="2.4" stroke-linejoin="round" stroke-linecap="round"/><path d="M25.5 15.5 Q23.5 11.5 19 11.5 Q12.5 11.5 12.5 20 Q12.5 28.5 19 28.5 Q25.5 28.5 25.5 21 H19.5" fill="none" stroke="#ced0d6" stroke-width="3.4" stroke-linejoin="round"/></svg>
<svg style="left:2960px;top:409px" width="40" height="40"><circle cx="20" cy="21" r="15" fill="none" stroke="#ced0d6" stroke-width="2.4" stroke-linejoin="round" stroke-linecap="round"/><rect x="13" y="14" width="6" height="6" fill="#ced0d6"/><rect x="21" y="14" width="6" height="6" fill="#ced0d6"/><rect x="13" y="22" width="6" height="6" fill="#ced0d6"/><rect x="21" y="22" width="6" height="6" fill="#ced0d6"/><circle cx="20" cy="5" r="3" fill="#ced0d6"/><circle cx="6" cy="30" r="3" fill="#ced0d6"/><circle cx="34" cy="30" r="3" fill="#ced0d6"/></svg>
<div class="a" style="left:0;top:1712px;width:3004px;height:54px;background:#2b2d30"></div>
<div class="a" style="left:0;top:1712px;width:3004px;height:1px;background:#1e1f22"></div>
<div class="a" style="left:24px;top:1734px;width:15px;height:15px;border:2.2px solid #5a8cf0;border-radius:3px"></div>
<div class="t" style="left:47px;top:1717px;color:#a9acb1;font-size:25.6px">HarmonyOS_Demo</div>
<svg style="left:289px;top:1734px" width="16" height="16"><path d="M4.8 1 L12.0 8.0 L4.8 15" fill="none" stroke="#a9acb1" stroke-width="2" stroke-linecap="round" stroke-linejoin="round"/></svg>
<div class="a" style="left:322px;top:1734px;width:15px;height:15px;border:2.2px solid #5a8cf0;border-radius:3px"></div>
<div class="t" style="left:345px;top:1717px;color:#a9acb1">entry</div>
<svg style="left:421px;top:1734px" width="16" height="16"><path d="M4.8 1 L12.0 8.0 L4.8 15" fill="none" stroke="#a9acb1" stroke-width="2" stroke-linecap="round" stroke-linejoin="round"/></svg>
<div class="t" style="left:453px;top:1717px;color:#a9acb1">src</div>
<svg style="left:505px;top:1734px" width="16" height="16"><path d="M4.8 1 L12.0 8.0 L4.8 15" fill="none" stroke="#a9acb1" stroke-width="2" stroke-linecap="round" stroke-linejoin="round"/></svg>
<div class="t" style="left:537px;top:1717px;color:#a9acb1">main</div>
<svg style="left:611px;top:1734px" width="16" height="16"><path d="M4.8 1 L12.0 8.0 L4.8 15" fill="none" stroke="#a9acb1" stroke-width="2" stroke-linecap="round" stroke-linejoin="round"/></svg>
<div class="t" style="left:643px;top:1717px;color:#a9acb1">ets</div>
<svg style="left:695px;top:1734px" width="16" height="16"><path d="M4.8 1 L12.0 8.0 L4.8 15" fill="none" stroke="#a9acb1" stroke-width="2" stroke-linecap="round" stroke-linejoin="round"/></svg>
<div class="t" style="left:727px;top:1717px;color:#a9acb1">pages</div>
<svg style="left:816px;top:1734px" width="16" height="16"><path d="M4.8 1 L12.0 8.0 L4.8 15" fill="none" stroke="#a9acb1" stroke-width="2" stroke-linecap="round" stroke-linejoin="round"/></svg>
<svg style="left:849px;top:1728px" width="30" height="30"><path d="M6 9 L13 2 V9 Z" fill="#a8abb0"/><rect x="14" y="2" width="13" height="14" fill="#a8abb0"/><rect x="6" y="11" width="7" height="5" fill="#a8abb0"/><rect x="1" y="17" width="28" height="12" fill="#3c95c4"/><text x="15" y="27.5" text-anchor="middle" font-family="Liberation Sans" font-size="11" fill="#1d4f6e" font-weight="bold">ETS</text></svg>
<div class="t" style="left:887px;top:1717px;color:#a9acb1">Index.ets</div>
<svg style="left:2437px;top:1725px" width="34" height="34"><path d="M4 3 H18 Q31 3 31 17 Q31 31 18 31 H4 Z" fill="none" stroke="#a9acb1" stroke-width="2.2" stroke-linejoin="round"/><path d="M22 13 Q20 9 16 9 Q10 9 10 17 Q10 25 16 25 Q22 25 22 18 H16" fill="none" stroke="#a9acb1" stroke-width="3"/></svg>
<div class="a" style="left:2510px;top:1730px;width:25px;height:25px;border-radius:13px;background:#3bae3c"></div>
<div class="t" style="left:2570px;top:1717px;color:#a9acb1">1:19</div>
<div class="t" style="left:2652px;top:1717px;color:#a9acb1">LF</div>
<div class="t" style="left:2714px;top:1717px;color:#a9acb1">UTF-8</div>
<div class="t" style="left:2826px;top:1717px;color:#a9acb1">2个空格</div>
<svg style="left:2955px;top:1728px" width="32" height="30"><rect x="2" y="12" width="20" height="15" rx="3" fill="none" stroke="#a9acb1" stroke-width="2.2"/><path d="M18 12 V8 Q18 3 23 3 Q28 3 28 8 V10" fill="none" stroke="#a9acb1" stroke-width="2.2"/><path d="M12 17 V21" stroke="#a9acb1" stroke-width="2.4"/></svg>
<div class="a" style="left:2126px;top:259px;width:616px;height:1326px;border-radius:86px;background:rgba(0,0,0,0.45);filter:blur(2px)"></div>
<div class="a" style="left:2129px;top:261px;width:610px;height:1320px;border-radius:84px;background:#060606"></div>
<div class="a" style="left:2130px;top:262px;width:608px;height:1318px;border-radius:83px;background:linear-gradient(to bottom,#4a4a4a 0%,#3c3c3c 69.8%,#d3cdc0 70%,#d6d0c3 100%)"></div>
<div class="a" style="left:2131px;top:268px;width:606px;height:1304px;border-radius:78px;background:linear-gradient(to bottom,#bcbcbc 0,#2a2a2a 0.8%,#6a6a6a 8%,#8a8a8a 69.8%,#b9b4a8 70%,#c2bdb2 100%)"></div>
<div class="a" style="left:2134px;top:270px;width:600px;height:1300px;border-radius:76px;background:linear-gradient(to right,#505050 0,#a0a0a0 5px,#bdbdbd 6px,transparent 7px,transparent calc(100% - 6px),#606060 100%)"></div>
<div class="a" style="left:2138px;top:279px;width:595px;height:1284px;border-radius:68px;background:#000"></div>
<div class="a" style="left:2140px;top:288px;width:591px;height:1270px;border-radius:62px;background:#fff;overflow:hidden">
<div class="a" style="left:0;top:62px;width:591px;height:1164px;background:#fdf6ef"></div>
<div class="a" style="left:29px;top:18px;font:500 24px 'Liberation Sans', sans-serif;color:#000;line-height:32px;-webkit-text-stroke:0.5px #000">07:53</div>
<div class="a" style="left:231px;top:18px;width:34px;height:34px;border-radius:17px;background:radial-gradient(circle at 50% 45%,#1f3350 0,#0b0f18 30%,#000 60%)"></div>
<div class="a" style="left:278px;top:18px;width:34px;height:34px;border-radius:17px;background:radial-gradient(circle at 50% 45%,#1f3350 0,#0b0f18 30%,#000 60%)"></div>
<div class="a" style="left:325px;top:18px;width:34px;height:34px;border-radius:17px;background:radial-gradient(circle at 50% 45%,#1f3350 0,#0b0f18 30%,#000 60%)"></div>
<svg style="left:446px;top:25px" width="34" height="20"><path d="M8 2 L2 10 L8 18 M26 2 L32 10 L26 18" fill="none" stroke="#000" stroke-width="2.4"/><circle cx="12" cy="10" r="1.6" fill="#000"/><circle cx="17" cy="10" r="1.6" fill="#000"/><circle cx="22" cy="10" r="1.6" fill="#000"/></svg>
<svg style="left:486px;top:20px" width="30" height="26"><path d="M1 1 L6 6 M6 1 L1 6" stroke="#000" stroke-width="2"/><rect x="4" y="19" width="3" height="5" fill="#bbb"/><rect x="10" y="15" width="3" height="9" fill="#bbb"/><rect x="16" y="11" width="3" height="13" fill="#bbb"/><rect x="22" y="5" width="3" height="19" fill="#bbb"/></svg>
<div class="a" style="left:522px;top:24px;width:37px;height:22px;border:2.2px solid #000;border-radius:6px;background:#d8d8d8;font:bold 15px 'Liberation Sans', sans-serif;line-height:18px;text-align:center;color:#000;letter-spacing:-0.5px">100</div>
<div class="a" style="left:560px;top:31px;width:3px;height:8px;background:#000;border-radius:1px"></div>
<div class="a" style="left:0;top:88px;width:591px;text-align:center;font:bold 37px 'Liberation Sans', sans-serif;color:#8b4513;line-height:52px">传统文化精品</div>
<div class="a" style="left:26px;top:161px;width:538px;height:1065px;background:#fcf4dc"></div>
<div class="a" style="left:26px;top:161.0px;width:538px;height:163px;border-radius:16px;background:#fff;box-shadow:0 1px 6px rgba(240,220,170,0.6)">
<div class="a" style="left:18px;top:19px;width:125px;height:125px;border-radius:12px;background:#fdf3ec"></div>
<div class="a" style="left:18px;top:32px;width:125px;height:70px;text-align:center;font-size:58px;line-height:70px;filter:saturate(0.8) hue-rotate(8deg);">🫖</div>
<div class="a" style="left:18px;top:110px;width:125px;text-align:center"><span style="display:inline-block;padding:0 9px;height:24px;border-radius:5px;background:#d9690f;color:#fff;font:15px 'Liberation Sans', sans-serif;line-height:24px;-webkit-text-stroke:0.2px #fff">茶具</span></div>
<div class="a" style="left:164px;top:44px;font:500 25px 'Liberation Sans', sans-serif;color:#8b4513;line-height:36px;white-space:nowrap;-webkit-text-stroke:0.7px #8b4513">青花瓷茶具</div>
<div class="a" style="right:20px;top:42px;font:bold 30.5px 'Liberation Sans', sans-serif;color:#e5083d;line-height:40px;white-space:nowrap">¥688</div>
<div class="a" style="left:164px;top:89px;font:500 22px 'Liberation Sans', sans-serif;color:#a0522d;line-height:32px;white-space:nowrap;-webkit-text-stroke:0.3px #a0522d">景德镇手工青花瓷，传承千年工艺</div>
</div>
<div class="a" style="left:26px;top:343.5px;width:538px;height:163px;border-radius:16px;background:#fff;box-shadow:0 1px 6px rgba(240,220,170,0.6)">
<div class="a" style="left:18px;top:19px;width:125px;height:125px;border-radius:12px;background:#fdf3ec"></div>
<div class="a" style="left:18px;top:32px;width:125px;height:70px;text-align:center;font-size:58px;line-height:70px;filter:sepia(0.5) saturate(1.6) brightness(0.95);">📜</div>
<div class="a" style="left:18px;top:110px;width:125px;text-align:center"><span style="display:inline-block;padding:0 9px;height:24px;border-radius:5px;background:#d9690f;color:#fff;font:15px 'Liberation Sans', sans-serif;line-height:24px;-webkit-text-stroke:0.2px #fff">文房四宝</span></div>
<div class="a" style="left:164px;top:44px;font:500 25px 'Liberation Sans', sans-serif;color:#8b4513;line-height:36px;white-space:nowrap;-webkit-text-stroke:0.7px #8b4513">宣纸书法套装</div>
<div class="a" style="right:20px;top:42px;font:bold 30.5px 'Liberation Sans', sans-serif;color:#e5083d;line-height:40px;white-space:nowrap">¥298</div>
<div class="a" style="left:164px;top:89px;font:500 22px 'Liberation Sans', sans-serif;color:#a0522d;line-height:32px;white-space:nowrap;-webkit-text-stroke:0.3px #a0522d">安徽宣纸，配毛笔墨汁，初学者首选</div>
</div>
<div class="a" style="left:26px;top:526.0px;width:538px;height:163px;border-radius:16px;background:#fff;box-shadow:0 1px 6px rgba(240,220,170,0.6)">
<div class="a" style="left:18px;top:19px;width:125px;height:125px;border-radius:12px;background:#fdf3ec"></div>
<div class="a" style="left:18px;top:32px;width:125px;height:70px;text-align:center;font-size:58px;line-height:70px;filter:sepia(0.35) saturate(1.2) brightness(1.08);">🍵</div>
<div class="a" style="left:18px;top:110px;width:125px;text-align:center"><span style="display:inline-block;padding:0 9px;height:24px;border-radius:5px;background:#d9690f;color:#fff;font:15px 'Liberation Sans', sans-serif;line-height:24px;-webkit-text-stroke:0.2px #fff">茶具</span></div>
<div class="a" style="left:164px;top:44px;font:500 25px 'Liberation Sans', sans-serif;color:#8b4513;line-height:36px;white-space:nowrap;-webkit-text-stroke:0.7px #8b4513">紫砂壶</div>
<div class="a" style="right:20px;top:42px;font:bold 30.5px 'Liberation Sans', sans-serif;color:#e5083d;line-height:40px;white-space:nowrap">¥1280</div>
<div class="a" style="left:164px;top:89px;font:500 22px 'Liberation Sans', sans-serif;color:#a0522d;line-height:32px;white-space:nowrap;-webkit-text-stroke:0.3px #a0522d">宜兴紫砂，纯手工制作，养壶佳品</div>
</div>
<div class="a" style="left:26px;top:708.5px;width:538px;height:163px;border-radius:16px;background:#fff;box-shadow:0 1px 6px rgba(240,220,170,0.6)">
<div class="a" style="left:18px;top:19px;width:125px;height:125px;border-radius:12px;background:#fdf3ec"></div>
<div class="a" style="left:18px;top:32px;width:125px;height:70px;text-align:center;font-size:58px;line-height:70px;transform:rotate(90deg);">🪢</div>
<div class="a" style="left:18px;top:110px;width:125px;text-align:center"><span style="display:inline-block;padding:0 9px;height:24px;border-radius:5px;background:#d9690f;color:#fff;font:15px 'Liberation Sans', sans-serif;line-height:24px;-webkit-text-stroke:0.2px #fff">装饰品</span></div>
<div class="a" style="left:164px;top:44px;font:500 25px 'Liberation Sans', sans-serif;color:#8b4513;line-height:36px;white-space:nowrap;-webkit-text-stroke:0.7px #8b4513">中国结挂饰</div>
<div class="a" style="right:20px;top:42px;font:bold 30.5px 'Liberation Sans', sans-serif;color:#e5083d;line-height:40px;white-space:nowrap">¥88</div>
<div class="a" style="left:164px;top:89px;font:500 22px 'Liberation Sans', sans-serif;color:#a0522d;line-height:32px;white-space:nowrap;-webkit-text-stroke:0.3px #a0522d">手工编织，寓意吉祥如意</div>
</div>
<div class="a" style="left:26px;top:891.0px;width:538px;height:163px;border-radius:16px;background:#fff;box-shadow:0 1px 6px rgba(240,220,170,0.6)">
<div class="a" style="left:18px;top:19px;width:125px;height:125px;border-radius:12px;background:#fdf3ec"></div>
<div class="a" style="left:18px;top:32px;width:125px;height:70px;text-align:center;font-size:58px;line-height:70px;filter:grayscale(1) brightness(0.35);">🎵</div>
<div class="a" style="left:18px;top:110px;width:125px;text-align:center"><span style="display:inline-block;padding:0 9px;height:24px;border-radius:5px;background:#d9690f;color:#fff;font:15px 'Liberation Sans', sans-serif;line-height:24px;-webkit-text-stroke:0.2px #fff">乐器</span></div>
<div class="a" style="left:164px;top:44px;font:500 25px 'Liberation Sans', sans-serif;color:#8b4513;line-height:36px;white-space:nowrap;-webkit-text-stroke:0.7px #8b4513">古琴</div>
<div class="a" style="right:20px;top:42px;font:bold 30.5px 'Liberation Sans', sans-serif;color:#e5083d;line-height:40px;white-space:nowrap">¥3800</div>
<div class="a" style="left:164px;top:89px;font:500 22px 'Liberation Sans', sans-serif;color:#a0522d;line-height:32px;white-space:nowrap;-webkit-text-stroke:0.3px #a0522d">桐木古琴，音色悠扬，附赠教学视频</div>
</div>
<div class="a" style="left:26px;top:1073.5px;width:538px;height:163px;border-radius:16px;background:#fff;box-shadow:0 1px 6px rgba(240,220,170,0.6)">
<div class="a" style="left:18px;top:19px;width:125px;height:125px;border-radius:12px;background:#fdf3ec"></div>
<div class="a" style="left:18px;top:32px;width:125px;height:70px;text-align:center;font-size:58px;line-height:70px;filter:hue-rotate(12deg) saturate(0.75) brightness(1.08);">🏺</div>
<div class="a" style="left:18px;top:110px;width:125px;text-align:center"><span style="display:inline-block;padding:0 9px;height:24px;border-radius:5px;background:#d9690f;color:#fff;font:15px 'Liberation Sans', sans-serif;line-height:24px;-webkit-text-stroke:0.2px #fff">工艺品</span></div>
<div class="a" style="left:164px;top:44px;font:500 25px 'Liberation Sans', sans-serif;color:#8b4513;line-height:36px;white-space:nowrap;-webkit-text-stroke:0.7px #8b4513">景泰蓝花瓶</div>
<div class="a" style="right:20px;top:42px;font:bold 30.5px 'Liberation Sans', sans-serif;color:#e5083d;line-height:40px;white-space:nowrap">¥1580</div>
<div class="a" style="left:164px;top:89px;font:500 22px 'Liberation Sans', sans-serif;color:#a0522d;line-height:32px;white-space:nowrap;-webkit-text-stroke:0.3px #a0522d">北京景泰蓝，宫廷工艺，收藏佳品</div>
</div>
<div class="a" style="left:0;top:1226px;width:591px;height:44px;background:#fff"></div>
<div class="a" style="left:207px;top:1253px;width:175px;height:8px;border-radius:4px;background:#a8a8a8"></div>
</div>
<div class="a" style="left:2790px;top:368px;width:96px;height:1107px;border-radius:16px;background:#fff;box-shadow:0 0 8px rgba(0,0,0,0.4)"></div>
<div class="a" style="left:2807px;top:399px;width:13px;height:3px;background:#111"></div>
<svg style="left:2841px;top:380px" width="40" height="40"><path d="M10 10 L30 30 M30 10 L10 30" fill="none" stroke="#111" stroke-width="2.4" stroke-linecap="round" stroke-linejoin="round"/></svg>
<svg style="left:2818px;top:452px" width="40" height="40"><path d="M7 8 H33 M7 20 H33 M7 32 H33" fill="none" stroke="#111" stroke-width="2.4" stroke-linecap="round" stroke-linejoin="round"/></svg>
<div class="a" style="left:2806px;top:512px;width:64px;height:2px;background:#e3e3e3"></div>
<svg style="left:2818px;top:534px" width="40" height="40"><path d="M5 5 H35 M20 13 V36 M10 23 L20 13 L30 23" fill="none" stroke="#111" stroke-width="2.4" stroke-linecap="round" stroke-linejoin="round"/></svg>
<svg style="left:2818px;top:615px" width="40" height="40"><path d="M11 3 V29 H37 M3 11 H29 V37" fill="none" stroke="#111" stroke-width="2.4" stroke-linecap="round" stroke-linejoin="round"/></svg>
<svg style="left:2818px;top:693px" width="40" height="40"><path d="M4.5 19 A16 16 0 1 1 9 31" fill="none" stroke="#111" stroke-width="2.4" stroke-linecap="round" stroke-linejoin="round"/><path d="M1.5 15 L4.5 20.5 L9.5 17" fill="none" stroke="#111" stroke-width="2.4" stroke-linecap="round" stroke-linejoin="round"/><rect x="14" y="14" width="12" height="12" rx="3" fill="none" stroke="#111" stroke-width="2.4" stroke-linecap="round" stroke-linejoin="round"/></svg>
<svg style="left:2818px;top:773px" width="40" height="40"><path d="M35.5 19 A16 16 0 1 0 31 31" fill="none" stroke="#111" stroke-width="2.4" stroke-linecap="round" stroke-linejoin="round"/><path d="M30.5 17 L35.5 20.5 L38.5 15" fill="none" stroke="#111" stroke-width="2.4" stroke-linecap="round" stroke-linejoin="round"/><rect x="14" y="14" width="12" height="12" rx="3" fill="none" stroke="#111" stroke-width="2.4" stroke-linecap="round" stroke-linejoin="round"/></svg>
<svg style="left:2818px;top:854px" width="40" height="40"><path d="M4 14 Q4 12 6 12 H10 L17 5 Q19 4 19 6 V34 Q19 36 17 35 L10 28 H6 Q4 28 4 26 Z" fill="none" stroke="#111" stroke-width="2.4" stroke-linecap="round" stroke-linejoin="round"/><path d="M25 20 H36 M30.5 14.5 V25.5" fill="none" stroke="#111" stroke-width="2.4" stroke-linecap="round" stroke-linejoin="round"/></svg>
<svg style="left:2818px;top:934px" width="40" height="40"><path d="M4 14 Q4 12 6 12 H10 L17 5 Q19 4 19 6 V34 Q19 36 17 35 L10 28 H6 Q4 28 4 26 Z" fill="none" stroke="#111" stroke-width="2.4" stroke-linecap="round" stroke-linejoin="round"/><path d="M25 20 H36" fill="none" stroke="#111" stroke-width="2.4" stroke-linecap="round" stroke-linejoin="round"/></svg>
<svg style="left:2818px;top:1014px" width="40" height="40"><g transform="rotate(20 20 20)"><rect x="12" y="4" width="16" height="32" rx="3" fill="none" stroke="#111" stroke-width="2.4" stroke-linecap="round" stroke-linejoin="round"/><path d="M17 30 H23" fill="none" stroke="#111" stroke-width="2.4" stroke-linecap="round" stroke-linejoin="round"/></g><path d="M8 11 Q2 19 6 28 M32 12 Q38 21 34 29" fill="none" stroke="#111" stroke-width="2.4" stroke-linecap="round" stroke-linejoin="round"/></svg>
<svg style="left:2818px;top:1095px" width="40" height="40"><path d="M14 30 H7 Q4 30 4 27 V9 Q4 6 7 6 H24 Q27 6 27 9 V11 M4 24 H14" fill="none" stroke="#111" stroke-width="2.4" stroke-linecap="round" stroke-linejoin="round"/><rect x="16" y="14" width="16" height="22" rx="3" fill="none" stroke="#111" stroke-width="2.4" stroke-linecap="round" stroke-linejoin="round"/><path d="M22 31 H26" fill="none" stroke="#111" stroke-width="2.4" stroke-linecap="round" stroke-linejoin="round"/></svg>
<div class="a" style="left:2806px;top:1234px;width:64px;height:2px;background:#e3e3e3"></div>
<svg style="left:2818px;top:1256px" width="40" height="40"><path d="M32 4 V36 L6 20 Z" fill="none" stroke="#111" stroke-width="2.6" stroke-linecap="round" stroke-linejoin="round"/></svg>
<svg style="left:2818px;top:1336px" width="40" height="40"><circle cx="20" cy="20" r="16" fill="none" stroke="#111" stroke-width="2.6" stroke-linecap="round" stroke-linejoin="round"/></svg>
<svg style="left:2818px;top:1416px" width="40" height="40"><rect x="5" y="5" width="30" height="30" rx="6" fill="none" stroke="#111" stroke-width="2.6" stroke-linecap="round" stroke-linejoin="round"/></svg>
</body></html>
